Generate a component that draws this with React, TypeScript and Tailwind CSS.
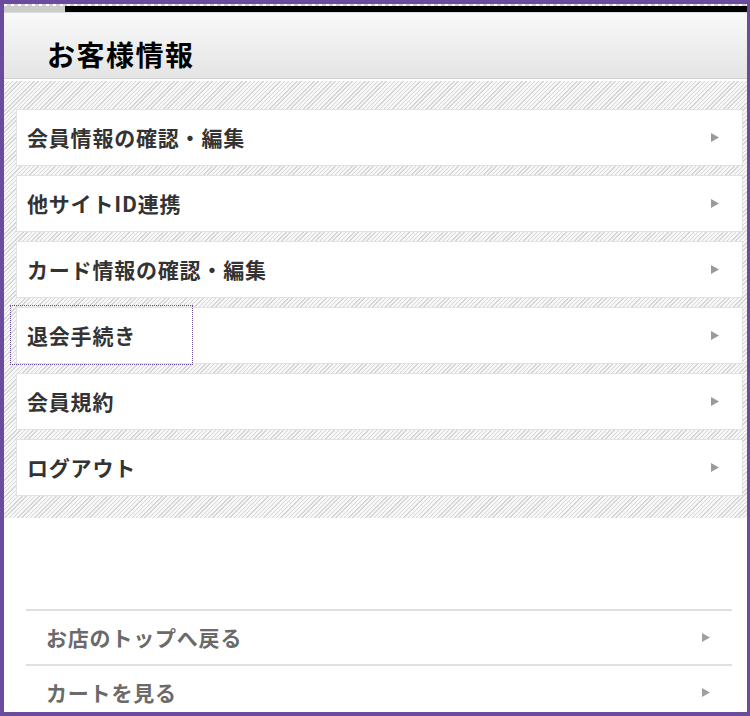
import React from "react";

const rows = [
  "会員情報の確認・編集",
  "他サイトID連携",
  "カード情報の確認・編集",
  "退会手続き",
  "会員規約",
  "ログアウト",
];

function Arrow({ color = "#9a9a9a" }: { color?: string }) {
  return (
    <svg width="8" height="9" viewBox="0 0 8 9" className="shrink-0">
      <polygon points="0,0 8,4.5 0,9" fill={color} />
    </svg>
  );
}

export default function App() {
  return (
    <div
      className="w-[750px] h-[716px] box-border border-solid border-[#6b4b9e] border-t-[4px] border-l-[4px] border-r-[3px] border-b-[4px] bg-white flex flex-col overflow-hidden"
      style={{ fontFamily: '"Noto Sans CJK JP", "Liberation Sans", sans-serif' }}
    >
      {/* dotted row */}
      <div className="shrink-0 h-[2px] bg-[repeating-linear-gradient(90deg,#ffffff_0,#ffffff_3px,#cfcfcf_3px,#cfcfcf_7px)]" />
      {/* progress bar */}
      <div className="shrink-0 h-[6px] flex">
        <div className="w-[61px] bg-[#cccccc]" />
        <div className="flex-1 bg-black" />
      </div>
      {/* header */}
      <div className="shrink-0 h-[66px] border-t border-[#dddddd] bg-[linear-gradient(#f9f9f9,#e4e4e4)] pl-[43px] pt-[24px]">
        <div className="text-[28px] leading-[34px] font-bold text-black tracking-[1.5px]">お客様情報</div>
      </div>
      <div className="shrink-0 h-[1px] bg-[#d2d2d2]" />
      <div className="shrink-0 h-[2px] bg-white" />
      {/* hatched list */}
      <div className="shrink-0 bg-[repeating-linear-gradient(135deg,#d6d6d6_0,#d6d6d6_1px,#f7f7f7_1px,#f7f7f7_3px)] pl-[12px] pr-[4px] pt-[28px] pb-[22px] flex flex-col gap-[9px]">
        {rows.map((r, i) => (
          <div
            key={r}
            className="relative h-[57px] bg-white border border-[#e2e2e2] flex items-center justify-between pl-[10px] pr-[23px]"
          >
            <span className="text-[21px] font-bold text-[#333333] tracking-[0.8px] leading-none">{r}</span>
            <Arrow />
            {i === 3 && (
              <div className="absolute left-[-7px] top-[-3px] w-[183px] h-[60px] border border-dotted border-[#6b4b9e]" />
            )}
          </div>
        ))}
      </div>
      {/* bottom links */}
      <div className="flex-1 min-h-0 overflow-hidden bg-white pt-[91px] pl-[22px] pr-[15px]">
        {["お店のトップへ戻る", "カートを見る"].map((t) => (
          <div key={t} className="border-t-2 border-[#e0e0e0] h-[55px] flex items-center justify-between pl-[20px] pr-[22px]">
            <span className="text-[21px] font-bold text-[#6a6a6a] tracking-[0.8px] leading-none">{t}</span>
            <Arrow color="#a0a0a0" />
          </div>
        ))}
      </div>
    </div>
  );
}
